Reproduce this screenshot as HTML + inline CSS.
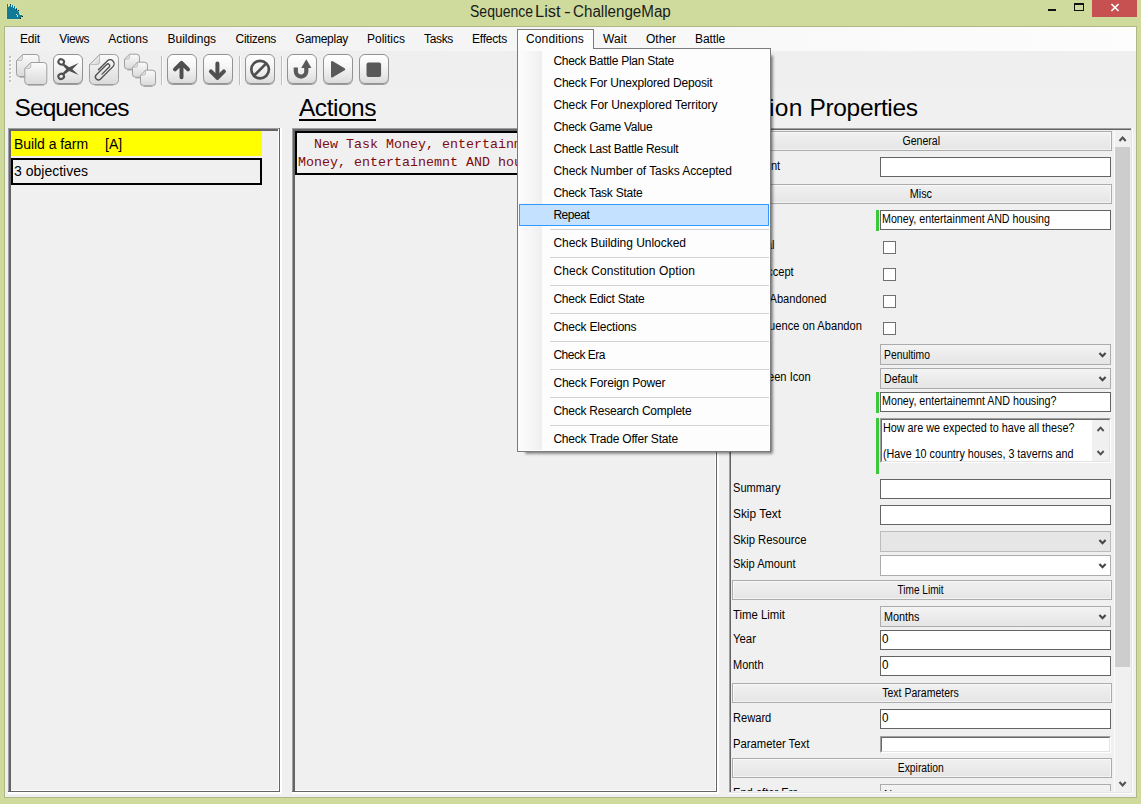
<!DOCTYPE html>
<html><head><meta charset="utf-8"><title>Sequence List - ChallengeMap</title>
<style>
html,body{margin:0;padding:0;}
body{width:1141px;height:804px;position:relative;overflow:hidden;background:#cedb9c;font-family:"Liberation Sans",sans-serif;}
.t{position:absolute;white-space:pre;}
div{box-sizing:border-box;}
.tb{position:absolute;top:54px;width:30px;height:30px;border:1px solid #929292;border-radius:6px;background:linear-gradient(#ffffff,#f6f6f6 40%,#dcdcdc);box-shadow:0 1px 0.5px rgba(0,0,0,.35);}
.tb svg{position:absolute;left:0;top:0;}
.hdr{position:absolute;left:732px;width:380px;height:20px;border:1px solid #acacac;background:linear-gradient(#f1f1f1,#e5e5e5);box-shadow:inset 0 0 0 1px rgba(255,255,255,.55);}
.tx{position:absolute;left:880px;width:231px;height:20px;border:1px solid #646464;background:#fff;}
.cb{position:absolute;left:883px;width:13px;height:13px;border:1px solid #707070;background:#fff;}
.combo{position:absolute;left:880px;width:231px;height:21px;border:1px solid #acacac;background:linear-gradient(#f3f3f3,#e5e5e5);}
.gbar{position:absolute;left:876px;width:3px;background:#3cc83c;}
.sep{position:absolute;left:550px;width:219px;height:1px;background:#d2d2d2;}
</style></head><body>

<div style="position:absolute;left:0;top:0;width:1141px;height:804px;background:#cedb9c;"></div>
<svg style="position:absolute;left:0;top:0" width="30" height="24" viewBox="0 0 30 24"><path d="M7 4 L8 4 L8 7 L9 7 L9 6 L10 6 L10 4 L11 4 L11 7 L12 7 L12 5 L13 5 L13 8 L14 8 L14 6 L15 6 L15 9 L16 9 L16 8 L17 8 L17 10 L18 11 L19 12 L19 14 L20 15 L22 15 L23 16.5 L22 17 L21 17 L21 19 L7 19 Z" fill="#0f7b98" stroke="#dfe3a6" stroke-width="1.2" paint-order="stroke"/><rect x="16" y="14" width="1" height="1" fill="#dfe6b4"/><rect x="17" y="15" width="1" height="2" fill="#dfe6b4"/><rect x="18" y="10" width="1" height="1" fill="#111"/><rect x="22" y="16" width="1" height="1" fill="#111"/><rect x="20" y="18" width="1" height="1" fill="#111"/><rect x="10" y="4" width="1" height="1" fill="#234"/><rect x="16" y="9" width="1" height="1" fill="#123"/></svg>
<span id="t1" class="t" style="left:469.5px;top:2.4499999999999993px;font-size:16px;line-height:20px;color:#1a1a1a;display:inline-block;transform:scaleX(0.8756);transform-origin:left center;">Sequence</span>
<span id="t2" class="t" style="left:535.2px;top:2.4499999999999993px;font-size:16px;line-height:20px;color:#1a1a1a;display:inline-block;transform:scaleX(1.0279);transform-origin:left center;">List</span>
<span id="t3" class="t" style="left:564.2px;top:2.4499999999999993px;font-size:16px;line-height:20px;color:#1a1a1a;display:inline-block;transform:scaleX(1.2575);transform-origin:left center;">-</span>
<span id="t4" class="t" style="left:572.9px;top:2.4499999999999993px;font-size:16px;line-height:20px;color:#1a1a1a;display:inline-block;transform:scaleX(0.9478);transform-origin:left center;">ChallengeMap</span>
<div style="position:absolute;left:1048px;top:9px;width:8px;height:2px;background:#111;"></div>
<div style="position:absolute;left:1074px;top:3px;width:10px;height:8px;border:1px solid #111;border-top:2px solid #111;"></div>
<div style="position:absolute;left:1092px;top:0px;width:45px;height:17px;background:#c75050;"></div>
<svg style="position:absolute;left:1110px;top:3px" width="10" height="9" viewBox="0 0 10 9"><path d="M1.4 1 L8.6 8 M8.6 1 L1.4 8" stroke="#fff" stroke-width="1.7" fill="none"/></svg>
<div style="position:absolute;left:4px;top:26px;width:1133px;height:772px;background:#adb882;"></div>
<div style="position:absolute;left:5px;top:27px;width:1131px;height:770px;background:#f0f0f0;"></div>
<div style="position:absolute;left:5px;top:27px;width:1131px;height:24px;background:linear-gradient(to right,#f0f0f0,#fdfdfd);"></div>
<div style="position:absolute;left:5px;top:51px;width:1131px;height:38px;background:#efefef;"></div>
<div style="position:absolute;left:517px;top:29px;width:77px;height:21px;background:#fdfdfd;border:1px solid #7c7c7c;border-bottom:none;"></div>
<span id="t5" class="t" style="left:20px;top:31.0px;font-size:12px;line-height:16px;color:#000;letter-spacing:-0.172px;">Edit</span>
<span id="t6" class="t" style="left:59.3px;top:31.0px;font-size:12px;line-height:16px;color:#000;letter-spacing:-0.419px;">Views</span>
<span id="t7" class="t" style="left:108.3px;top:31.0px;font-size:12px;line-height:16px;color:#000;letter-spacing:0.049px;">Actions</span>
<span id="t8" class="t" style="left:167.6px;top:31.0px;font-size:12px;line-height:16px;color:#000;letter-spacing:-0.034px;">Buildings</span>
<span id="t9" class="t" style="left:235.6px;top:31.0px;font-size:12px;line-height:16px;color:#000;letter-spacing:-0.286px;">Citizens</span>
<span id="t10" class="t" style="left:295.6px;top:31.0px;font-size:12px;line-height:16px;color:#000;letter-spacing:-0.288px;">Gameplay</span>
<span id="t11" class="t" style="left:367px;top:31.0px;font-size:12px;line-height:16px;color:#000;letter-spacing:-0.002px;">Politics</span>
<span id="t12" class="t" style="left:424px;top:31.0px;font-size:12px;line-height:16px;color:#000;letter-spacing:-0.338px;">Tasks</span>
<span id="t13" class="t" style="left:472px;top:31.0px;font-size:12px;line-height:16px;color:#000;letter-spacing:-0.210px;">Effects</span>
<span id="t14" class="t" style="left:526px;top:31.0px;font-size:12px;line-height:16px;color:#000;letter-spacing:0.130px;">Conditions</span>
<span id="t15" class="t" style="left:603px;top:31.0px;font-size:12px;line-height:16px;color:#000;letter-spacing:0.109px;">Wait</span>
<span id="t16" class="t" style="left:646px;top:31.0px;font-size:12px;line-height:16px;color:#000;letter-spacing:-0.003px;">Other</span>
<span id="t17" class="t" style="left:695px;top:31.0px;font-size:12px;line-height:16px;color:#000;letter-spacing:-0.115px;">Battle</span>
<div style="position:absolute;left:9px;top:56px;width:2px;height:2px;background:#c2c2c2;box-shadow:1px 1px 0 #fbfbfb;"></div>
<div style="position:absolute;left:9px;top:60px;width:2px;height:2px;background:#c2c2c2;box-shadow:1px 1px 0 #fbfbfb;"></div>
<div style="position:absolute;left:9px;top:64px;width:2px;height:2px;background:#c2c2c2;box-shadow:1px 1px 0 #fbfbfb;"></div>
<div style="position:absolute;left:9px;top:68px;width:2px;height:2px;background:#c2c2c2;box-shadow:1px 1px 0 #fbfbfb;"></div>
<div style="position:absolute;left:9px;top:72px;width:2px;height:2px;background:#c2c2c2;box-shadow:1px 1px 0 #fbfbfb;"></div>
<div style="position:absolute;left:9px;top:76px;width:2px;height:2px;background:#c2c2c2;box-shadow:1px 1px 0 #fbfbfb;"></div>
<div style="position:absolute;left:9px;top:80px;width:2px;height:2px;background:#c2c2c2;box-shadow:1px 1px 0 #fbfbfb;"></div>
<svg width="0" height="0" style="position:absolute"><defs><linearGradient id="pg" x1="0" y1="0" x2="0" y2="1"><stop offset="0" stop-color="#fbfbfb"/><stop offset="1" stop-color="#dadada"/></linearGradient><linearGradient id="pf" x1="0" y1="0" x2="1" y2="1"><stop offset="0.4" stop-color="#f4f4f4"/><stop offset="1" stop-color="#cfcfcf"/></linearGradient></defs></svg>
<svg style="position:absolute;left:15px;top:53px" width="34" height="34" viewBox="0 0 34 34"><path d="M7.5 1.5 L21.0 1.5 Q24.0 1.5 24.0 4.5 L24.0 20.5 Q24.0 23.5 21.0 23.5 L4.5 23.5 Q1.5 23.5 1.5 20.5 L1.5 7.5 Z" fill="url(#pg)" stroke="#9e9e9e" stroke-width="1"/><path d="M2.0 7.5 L7.5 2.0 L7.5 5.5 Q7.5 7.5 5.5 7.5 Z" fill="url(#pf)" stroke="#b4b4b4" stroke-width="0.8"/><path d="M4.5 24.3 L21.0 24.3" stroke="#8a8a8a" stroke-width="1" opacity="0.6"/><path d="M15.8 9.5 L28.8 9.5 Q31.8 9.5 31.8 12.5 L31.8 28.5 Q31.8 31.5 28.8 31.5 L12.8 31.5 Q9.8 31.5 9.8 28.5 L9.8 15.5 Z" fill="url(#pg)" stroke="#9e9e9e" stroke-width="1"/><path d="M10.3 15.5 L15.8 10.0 L15.8 13.5 Q15.8 15.5 13.8 15.5 Z" fill="url(#pf)" stroke="#b4b4b4" stroke-width="0.8"/><path d="M12.8 32.3 L28.8 32.3" stroke="#8a8a8a" stroke-width="1" opacity="0.6"/></svg>
<div class="tb" style="left:53px"><svg style="position:absolute;left:-1px;top:-1px" width="30" height="31" viewBox="0 0 30 31"><g stroke="#4f4f4f" fill="none" stroke-width="2"><ellipse cx="8.2" cy="7.9" rx="2.9" ry="2.6" transform="rotate(30 8.2 7.9)"/><ellipse cx="8.2" cy="22.4" rx="2.9" ry="2.6" transform="rotate(-30 8.2 22.4)"/></g><path d="M10.4 9.2 L16.2 13.3 L25.6 9.1 L19.4 15.2 L25.6 20.9 L16.2 17.1 L10.4 21.2 L9.3 19.4 L13.4 15.2 L9.3 11 Z" fill="#4f4f4f"/></svg></div>
<svg style="position:absolute;left:88px;top:53px" width="34" height="34" viewBox="0 0 34 34"><path d="M11.5 1.5 L25.5 1.5 Q30.5 1.5 30.5 6.5 L30.5 26.5 Q30.5 31.5 25.5 31.5 L6.5 31.5 Q1.5 31.5 1.5 26.5 L1.5 11.5 Z" fill="url(#pg)" stroke="#9e9e9e" stroke-width="1"/><path d="M2.0 11.5 L11.5 2.0 L11.5 9.5 Q11.5 11.5 9.5 11.5 Z" fill="url(#pf)" stroke="#b4b4b4" stroke-width="0.8"/><path d="M6.5 32.3 L25.5 32.3" stroke="#8a8a8a" stroke-width="1" opacity="0.6"/><g transform="translate(16.1 16.8) rotate(45)"><path d="M-4 4 L-4 -8.5 A4 4 0 0 1 4 -8.5 L4 9 A3 3 0 0 1 -2 9 L-2 -5.6 A1.8 1.8 0 0 1 1.6 -5.6 L1.6 4.5" stroke="#505050" stroke-width="1.35" fill="none" stroke-linecap="round"/></g></svg>
<svg style="position:absolute;left:123px;top:53px" width="36" height="36" viewBox="0 0 36 36"><path d="M6.5 1.2 L13.5 1.2 Q16.5 1.2 16.5 4.2 L16.5 13.2 Q16.5 16.2 13.5 16.2 L4.5 16.2 Q1.5 16.2 1.5 13.2 L1.5 6.2 Z" fill="url(#pg)" stroke="#9e9e9e" stroke-width="1"/><path d="M2.0 6.2 L6.5 1.7 L6.5 4.2 Q6.5 6.2 4.5 6.2 Z" fill="url(#pf)" stroke="#b4b4b4" stroke-width="0.8"/><path d="M4.5 17.0 L13.5 17.0" stroke="#8a8a8a" stroke-width="1" opacity="0.6"/><path d="M14.5 9.2 L21.5 9.2 Q24.5 9.2 24.5 12.2 L24.5 21.2 Q24.5 24.2 21.5 24.2 L12.5 24.2 Q9.5 24.2 9.5 21.2 L9.5 14.2 Z" fill="url(#pg)" stroke="#9e9e9e" stroke-width="1"/><path d="M10.0 14.2 L14.5 9.7 L14.5 12.2 Q14.5 14.2 12.5 14.2 Z" fill="url(#pf)" stroke="#b4b4b4" stroke-width="0.8"/><path d="M12.5 25.0 L21.5 25.0" stroke="#8a8a8a" stroke-width="1" opacity="0.6"/><path d="M22.5 17.2 L29.5 17.2 Q32.5 17.2 32.5 20.2 L32.5 29.700000000000003 Q32.5 32.7 29.5 32.7 L20.5 32.7 Q17.5 32.7 17.5 29.700000000000003 L17.5 22.2 Z" fill="url(#pg)" stroke="#9e9e9e" stroke-width="1"/><path d="M18.0 22.2 L22.5 17.7 L22.5 20.2 Q22.5 22.2 20.5 22.2 Z" fill="url(#pf)" stroke="#b4b4b4" stroke-width="0.8"/><path d="M20.5 33.5 L29.5 33.5" stroke="#8a8a8a" stroke-width="1" opacity="0.6"/></svg>
<div style="position:absolute;left:161px;top:56px;width:1px;height:29px;background:#bdbdbd;"></div>
<div style="position:absolute;left:162px;top:56px;width:1px;height:29px;background:#fafafa;"></div>
<div class="tb" style="left:167px"><svg style="position:absolute;left:-1px;top:-1px" width="30" height="31" viewBox="0 0 30 31"><path d="M14.5 9 L14.5 23.3 M8 15.4 L14.5 8.9 L21 15.4" stroke="#4f4f4f" stroke-width="4" fill="none" stroke-linecap="round" stroke-linejoin="round"/></svg></div>
<div class="tb" style="left:203px"><svg style="position:absolute;left:-1px;top:-1px" width="30" height="31" viewBox="0 0 30 31"><path d="M14.4 9.4 L14.4 23.9 M7.9 17.4 L14.4 23.9 L20.9 17.4" stroke="#4f4f4f" stroke-width="4" fill="none" stroke-linecap="round" stroke-linejoin="round"/></svg></div>
<div style="position:absolute;left:239px;top:56px;width:1px;height:29px;background:#bdbdbd;"></div>
<div style="position:absolute;left:240px;top:56px;width:1px;height:29px;background:#fafafa;"></div>
<div class="tb" style="left:245px"><svg style="position:absolute;left:-1px;top:-1px" width="30" height="31" viewBox="0 0 30 31"><circle cx="15.1" cy="15.6" r="8.8" stroke="#4f4f4f" stroke-width="2.7" fill="none"/><path d="M8.9 21.8 L21.3 9.4" stroke="#4f4f4f" stroke-width="2.7"/></svg></div>
<div style="position:absolute;left:281px;top:56px;width:1px;height:29px;background:#bdbdbd;"></div>
<div style="position:absolute;left:282px;top:56px;width:1px;height:29px;background:#fafafa;"></div>
<div class="tb" style="left:287px"><svg style="position:absolute;left:-1px;top:-1px" width="30" height="31" viewBox="0 0 30 31"><path d="M8.8 13.5 L8.8 17.3 A5.25 5.25 0 0 0 19.3 17.3 L19.3 12.5" stroke="#595959" stroke-width="4.2" fill="none"/><path d="M14.2 14 L19.3 5.2 L24.4 14 Z" fill="#595959"/></svg></div>
<div class="tb" style="left:323px"><svg style="position:absolute;left:-1px;top:-1px" width="30" height="31" viewBox="0 0 30 31"><path d="M9.2 8.3 L21 15.3 L9.2 22.3 Z" fill="#595959" stroke="#595959" stroke-width="2.4" stroke-linejoin="round"/></svg></div>
<div class="tb" style="left:359px"><svg style="position:absolute;left:-1px;top:-1px" width="30" height="31" viewBox="0 0 30 31"><rect x="7.5" y="8.6" width="14.6" height="14.4" rx="2" fill="#595959"/></svg></div>
<span id="t18" class="t" style="left:14.6px;top:93.3px;font-size:24.5px;line-height:30px;color:#000;letter-spacing:-0.957px;">Sequences</span>
<span id="t19" class="t" style="left:299px;top:93.3px;font-size:24.5px;line-height:30px;color:#000;letter-spacing:-0.478px;text-decoration:underline;text-decoration-thickness:1.5px;text-underline-offset:2.5px;">Actions</span>
<div style="position:absolute;left:8px;top:128px;width:274px;height:666px;background:#fff;"></div>
<div style="position:absolute;left:8px;top:128px;width:272px;height:664px;background:#646464;"></div>
<div style="position:absolute;left:8px;top:128px;width:271px;height:663px;background:#fff;border-left:1px solid #a0a0a0;border-top:1px solid #a0a0a0;"></div>
<div style="position:absolute;left:9px;top:129px;width:2px;height:663px;background:#646468;"></div>
<div style="position:absolute;left:9px;top:129px;width:269px;height:661px;background:#f0f0f0;border-left:2px solid #646468;border-top:2px solid #646468;"></div>
<div style="position:absolute;left:11px;top:131px;width:251px;height:25px;background:#ffff00;"></div>
<span id="t20" class="t" style="left:14px;top:135.0px;font-size:14px;line-height:18px;color:#000;letter-spacing:-0.059px;">Build a farm</span>
<span id="t21" class="t" style="left:105px;top:135.0px;font-size:14px;line-height:18px;color:#000;">[A]</span>
<div style="position:absolute;left:11px;top:158px;width:251px;height:27px;border:2px solid #000;"></div>
<span id="t22" class="t" style="left:14px;top:162.0px;font-size:14px;line-height:18px;color:#000;letter-spacing:0.005px;">3 objectives</span>
<div style="position:absolute;left:292px;top:128px;width:427px;height:666px;background:#fff;"></div>
<div style="position:absolute;left:292px;top:128px;width:425px;height:664px;background:#646464;"></div>
<div style="position:absolute;left:292px;top:128px;width:424px;height:663px;background:#fff;border-left:1px solid #a0a0a0;border-top:1px solid #a0a0a0;"></div>
<div style="position:absolute;left:293px;top:129px;width:2px;height:663px;background:#646468;"></div>
<div style="position:absolute;left:293px;top:129px;width:422px;height:661px;background:#f0f0f0;border-left:2px solid #646468;border-top:2px solid #646468;"></div>
<div style="position:absolute;left:295px;top:131px;width:420px;height:44px;border:2px solid #000;overflow:hidden;"><span class="t" style="left:1px;top:4px;font-size:13.333px;line-height:16px;font-family:'Liberation Mono',monospace;color:#7d0c0c;">  New Task Money, entertainment AND housing</span><span class="t" style="left:1px;top:21.5px;font-size:13.333px;line-height:16px;font-family:'Liberation Mono',monospace;color:#7d0c0c;">Money, entertainemnt AND housing?</span></div>
<div style="position:absolute;left:729px;top:128px;width:404px;height:666px;background:#fff;"></div>
<div style="position:absolute;left:729px;top:128px;width:403px;height:665px;background:#e3e3e3;"></div>
<div style="position:absolute;left:729px;top:128px;width:402px;height:664px;background:#f0f0f0;border-left:1px solid #a0a0a0;border-top:1px solid #a0a0a0;"></div>
<div style="position:absolute;left:730px;top:129px;width:401px;height:663px;border-left:1px solid #646464;border-top:1px solid #646464;"></div>
<span id="t23" class="t" style="left:733px;top:93.3px;font-size:24.5px;line-height:30px;color:#000;letter-spacing:0.234px;">Action</span>
<span id="t24" class="t" style="left:809.6px;top:93.3px;font-size:24.5px;line-height:30px;color:#000;letter-spacing:-0.367px;">Properties</span>
<div style="position:absolute;left:1114px;top:130px;width:1px;height:662px;background:#fbfbfb;"></div>
<div style="position:absolute;left:1115px;top:130px;width:16px;height:662px;background:#f0f0f0;"></div>
<div style="position:absolute;left:1115px;top:147px;width:15px;height:520px;background:#cdcdcd;"></div>
<svg style="position:absolute;left:1118px;top:135px" width="9" height="8" viewBox="0 0 9 8"><path d="M1.5 6 L4.6 2.6 L7.7 6" stroke="#505050" stroke-width="2" fill="none"/></svg>
<svg style="position:absolute;left:1118px;top:780px" width="9" height="8" viewBox="0 0 9 8"><path d="M1.5 2 L4.6 5.4 L7.7 2" stroke="#505050" stroke-width="2" fill="none"/></svg>
<div class="hdr" style="top:131px"></div>
<div class="t" style="left:721px;width:400px;text-align:center;top:133.67px;font-size:12.5px;line-height:14px;color:#000;"><span id="t25" style="display:inline-block;display:inline-block;transform:scaleX(0.8452);transform-origin:center center;">General</span></div>
<span class="t" style="right:361px;top:158.67px;font-size:12.5px;line-height:14px;transform:scaleX(0.89);transform-origin:right center;">Comment</span>
<div class="tx" style="top:157px;height:20px"></div>
<div class="hdr" style="top:184px"></div>
<div class="t" style="left:721px;width:400px;text-align:center;top:186.67px;font-size:12.5px;line-height:14px;color:#000;"><span id="t26" style="display:inline-block;display:inline-block;transform:scaleX(0.8676);transform-origin:center center;">Misc</span></div>
<span class="t" style="right:381px;top:211.67px;font-size:12.5px;line-height:14px;transform:scaleX(0.89);transform-origin:right center;">Title</span>
<div class="gbar" style="top:210px;height:21px"></div>
<div class="tx" style="top:210px;height:20px"></div>
<span id="t27" class="t" style="left:882px;top:211.67px;font-size:12.5px;line-height:14px;color:#000;display:inline-block;transform:scaleX(0.8554);transform-origin:left center;">Money, entertainment AND housing</span>
<span class="t" style="right:366.4px;top:237.67px;font-size:12.5px;line-height:14px;transform:scaleX(0.89);transform-origin:right center;">Optional</span>
<span class="t" style="right:347.6px;top:264.67px;font-size:12.5px;line-height:14px;transform:scaleX(0.89);transform-origin:right center;">Auto Accept</span>
<span class="t" style="right:314.29999999999995px;top:291.67px;font-size:12.5px;line-height:14px;transform:scaleX(0.89);transform-origin:right center;">Can Be Abandoned</span>
<span class="t" style="right:279px;top:318.67px;font-size:12.5px;line-height:14px;transform:scaleX(0.89);transform-origin:right center;">Run Sequence on Abandon</span>
<div class="cb" style="top:241px"></div>
<div class="cb" style="top:268px"></div>
<div class="cb" style="top:295px"></div>
<div class="cb" style="top:322px"></div>
<span class="t" style="right:375px;top:345.67px;font-size:12.5px;line-height:14px;transform:scaleX(0.89);transform-origin:right center;">Character</span>
<div class="combo" style="top:344px;"></div>
<svg style="position:absolute;left:1098px;top:352px" width="9" height="6" viewBox="0 0 9 6"><path d="M1.4 1 L4.5 4.3 L7.6 1" stroke="#474747" stroke-width="2.1" fill="none"/></svg>
<span id="t28" class="t" style="left:884px;top:347.67px;font-size:12.5px;line-height:14px;color:#000;display:inline-block;transform:scaleX(0.8274);transform-origin:left center;">Penultimo</span>
<span class="t" style="right:330px;top:369.67px;font-size:12.5px;line-height:14px;transform:scaleX(0.89);transform-origin:right center;">Loading Screen Icon</span>
<div class="combo" style="top:368px;"></div>
<svg style="position:absolute;left:1098px;top:376px" width="9" height="6" viewBox="0 0 9 6"><path d="M1.4 1 L4.5 4.3 L7.6 1" stroke="#474747" stroke-width="2.1" fill="none"/></svg>
<span id="t29" class="t" style="left:884px;top:371.67px;font-size:12.5px;line-height:14px;color:#000;display:inline-block;transform:scaleX(0.8508);transform-origin:left center;">Default</span>
<span class="t" style="right:381px;top:393.67px;font-size:12.5px;line-height:14px;transform:scaleX(0.89);transform-origin:right center;">Text</span>
<div class="gbar" style="top:392px;height:21px"></div>
<div class="tx" style="top:392px;height:20px"></div>
<span id="t30" class="t" style="left:882px;top:393.67px;font-size:12.5px;line-height:14px;color:#000;display:inline-block;transform:scaleX(0.8581);transform-origin:left center;">Money, entertainemnt AND housing?</span>
<span class="t" style="right:375px;top:419.67px;font-size:12.5px;line-height:14px;transform:scaleX(0.89);transform-origin:right center;">Description</span>
<div class="gbar" style="top:418px;height:56px"></div>
<div style="position:absolute;left:880px;top:418px;width:231px;height:45px;background:#fff;border-top:1px solid #a0a0a0;border-left:1px solid #a0a0a0;border-right:1px solid #fff;border-bottom:1px solid #fff;"></div>
<div style="position:absolute;left:881px;top:419px;width:229px;height:43px;border-top:1px solid #696969;border-left:1px solid #696969;border-right:1px solid #e3e3e3;border-bottom:1px solid #e3e3e3;"></div>
<div style="position:absolute;left:1092px;top:420px;width:17px;height:41px;background:#f0f0f0;"></div>
<span id="t31" class="t" style="left:883px;top:420.67px;font-size:12.5px;line-height:14px;color:#000;display:inline-block;transform:scaleX(0.8639);transform-origin:left center;">How are we expected to have all these?</span>
<span id="t32" class="t" style="left:883px;top:446.67px;font-size:12.5px;line-height:14px;color:#000;display:inline-block;transform:scaleX(0.8594);transform-origin:left center;">(Have 10 country houses, 3 taverns and</span>
<svg style="position:absolute;left:1095.5px;top:425px" width="9" height="8" viewBox="0 0 9 8"><path d="M1.5 6 L4.6 2.6 L7.7 6" stroke="#505050" stroke-width="1.9" fill="none"/></svg>
<svg style="position:absolute;left:1095.5px;top:449px" width="9" height="8" viewBox="0 0 9 8"><path d="M1.5 2 L4.6 5.4 L7.7 2" stroke="#505050" stroke-width="1.9" fill="none"/></svg>
<span id="t33" class="t" style="left:733px;top:480.67px;font-size:12.5px;line-height:14px;color:#000;display:inline-block;transform:scaleX(0.8881);transform-origin:left center;">Summary</span>
<div class="tx" style="top:479px;height:20px"></div>
<span id="t34" class="t" style="left:733px;top:506.6700000000001px;font-size:12.5px;line-height:14px;color:#000;display:inline-block;transform:scaleX(0.9505);transform-origin:left center;">Skip Text</span>
<div class="tx" style="top:505px;height:20px"></div>
<span id="t35" class="t" style="left:733px;top:532.67px;font-size:12.5px;line-height:14px;color:#000;display:inline-block;transform:scaleX(0.9041);transform-origin:left center;">Skip Resource</span>
<div class="combo" style="top:531px;background:#e6e6e6;border-color:#bcbcbc;"></div>
<svg style="position:absolute;left:1098px;top:539px" width="9" height="6" viewBox="0 0 9 6"><path d="M1.4 1 L4.5 4.3 L7.6 1" stroke="#474747" stroke-width="2.1" fill="none"/></svg>
<span id="t36" class="t" style="left:733px;top:556.67px;font-size:12.5px;line-height:14px;color:#000;display:inline-block;transform:scaleX(0.8905);transform-origin:left center;">Skip Amount</span>
<div class="combo" style="top:555px;background:#fff;"></div>
<svg style="position:absolute;left:1098px;top:563px" width="9" height="6" viewBox="0 0 9 6"><path d="M1.4 1 L4.5 4.3 L7.6 1" stroke="#474747" stroke-width="2.1" fill="none"/></svg>
<div class="hdr" style="top:580px"></div>
<div class="t" style="left:721px;width:400px;text-align:center;top:582.67px;font-size:12.5px;line-height:14px;color:#000;"><span id="t37" style="display:inline-block;display:inline-block;transform:scaleX(0.8044);transform-origin:center center;">Time Limit</span></div>
<span id="t38" class="t" style="left:733px;top:607.67px;font-size:12.5px;line-height:14px;color:#000;display:inline-block;transform:scaleX(0.9093);transform-origin:left center;">Time Limit</span>
<div class="combo" style="top:606px;"></div>
<svg style="position:absolute;left:1098px;top:614px" width="9" height="6" viewBox="0 0 9 6"><path d="M1.4 1 L4.5 4.3 L7.6 1" stroke="#474747" stroke-width="2.1" fill="none"/></svg>
<span id="t39" class="t" style="left:884px;top:609.67px;font-size:12.5px;line-height:14px;color:#000;display:inline-block;transform:scaleX(0.8659);transform-origin:left center;">Months</span>
<span id="t40" class="t" style="left:733px;top:631.67px;font-size:12.5px;line-height:14px;color:#000;display:inline-block;transform:scaleX(0.9103);transform-origin:left center;">Year</span>
<div class="tx" style="top:630px;height:20px"></div>
<span id="t41" class="t" style="left:882px;top:631.67px;font-size:12.5px;line-height:14px;color:#000;display:inline-block;transform:scaleX(0.9348);transform-origin:left center;">0</span>
<span id="t42" class="t" style="left:733px;top:657.67px;font-size:12.5px;line-height:14px;color:#000;display:inline-block;transform:scaleX(0.8777);transform-origin:left center;">Month</span>
<div class="tx" style="top:656px;height:20px"></div>
<span id="t43" class="t" style="left:882px;top:657.67px;font-size:12.5px;line-height:14px;color:#000;display:inline-block;transform:scaleX(0.9348);transform-origin:left center;">0</span>
<div class="hdr" style="top:683px"></div>
<div class="t" style="left:721px;width:400px;text-align:center;top:685.67px;font-size:12.5px;line-height:14px;color:#000;"><span id="t44" style="display:inline-block;display:inline-block;transform:scaleX(0.8405);transform-origin:center center;">Text Parameters</span></div>
<span id="t45" class="t" style="left:733px;top:710.67px;font-size:12.5px;line-height:14px;color:#000;display:inline-block;transform:scaleX(0.8891);transform-origin:left center;">Reward</span>
<div class="tx" style="top:709px;height:20px"></div>
<span id="t46" class="t" style="left:882px;top:710.67px;font-size:12.5px;line-height:14px;color:#000;display:inline-block;transform:scaleX(0.9348);transform-origin:left center;">0</span>
<span id="t47" class="t" style="left:733px;top:736.67px;font-size:12.5px;line-height:14px;color:#000;display:inline-block;transform:scaleX(0.9026);transform-origin:left center;">Parameter Text</span>
<div style="position:absolute;left:880px;top:736px;width:231px;height:17px;background:#fff;border-top:1px solid #a0a0a0;border-left:1px solid #a0a0a0;border-right:1px solid #fff;border-bottom:1px solid #fff;"></div>
<div style="position:absolute;left:881px;top:737px;width:229px;height:15px;border-top:1px solid #696969;border-left:1px solid #696969;border-right:1px solid #e3e3e3;border-bottom:1px solid #e3e3e3;"></div>
<div class="hdr" style="top:758px"></div>
<div class="t" style="left:721px;width:400px;text-align:center;top:760.67px;font-size:12.5px;line-height:14px;color:#000;"><span id="t48" style="display:inline-block;display:inline-block;transform:scaleX(0.8274);transform-origin:center center;">Expiration</span></div>
<div style="position:absolute;left:731px;top:780px;width:383px;height:11px;overflow:hidden;"><span class="t" style="left:2px;top:5.669999999999959px;font-size:12.5px;line-height:14px;transform:scaleX(0.89);transform-origin:left center;">End after Era</span><div style="position:absolute;left:149px;top:4px;width:231px;height:21px;border:1px solid #acacac;background:linear-gradient(#f3f3f3,#e5e5e5);"></div><span class="t" style="left:153px;top:7.669999999999959px;font-size:12.5px;line-height:14px;transform:scaleX(0.89);transform-origin:left center;">None</span></div>
<div style="position:absolute;left:517px;top:48px;width:254px;height:404px;background:#fdfdfd;border:1px solid #7c7c7c;box-shadow:4.8px 4.2px 3px -2.7px rgba(0,0,0,.58);"></div>
<div style="position:absolute;left:518px;top:30px;width:75px;height:20px;background:#fdfdfd;"></div>
<span id="t49" class="t" style="left:526px;top:31.0px;font-size:12px;line-height:16px;color:#000;letter-spacing:0.130px;">Conditions</span>
<div style="position:absolute;left:520px;top:51px;width:22px;height:399px;background:linear-gradient(to right,#fcfcfc,#efefef);"></div>
<span id="t50" class="t" style="left:553.4px;top:53.0px;font-size:12px;line-height:16px;color:#000;letter-spacing:-0.272px;">Check Battle Plan State</span>
<span id="t51" class="t" style="left:553.4px;top:75.0px;font-size:12px;line-height:16px;color:#000;letter-spacing:-0.181px;">Check For Unexplored Deposit</span>
<span id="t52" class="t" style="left:553.4px;top:97.0px;font-size:12px;line-height:16px;color:#000;letter-spacing:-0.084px;">Check For Unexplored Territory</span>
<span id="t53" class="t" style="left:553.4px;top:119.0px;font-size:12px;line-height:16px;color:#000;letter-spacing:-0.261px;">Check Game Value</span>
<span id="t54" class="t" style="left:553.4px;top:141.0px;font-size:12px;line-height:16px;color:#000;letter-spacing:-0.267px;">Check Last Battle Result</span>
<span id="t55" class="t" style="left:553.4px;top:163.0px;font-size:12px;line-height:16px;color:#000;letter-spacing:-0.046px;">Check Number of Tasks Accepted</span>
<span id="t56" class="t" style="left:553.4px;top:185.0px;font-size:12px;line-height:16px;color:#000;letter-spacing:-0.261px;">Check Task State</span>
<div style="position:absolute;left:519px;top:204px;width:250px;height:22px;background:#c4e1ff;border:1px solid #3399ff;"></div>
<span id="t57" class="t" style="left:553.4px;top:207.0px;font-size:12px;line-height:16px;color:#000;letter-spacing:-0.451px;">Repeat</span>
<div class="sep" style="top:229px"></div>
<span id="t58" class="t" style="left:553.4px;top:235.0px;font-size:12px;line-height:16px;color:#000;letter-spacing:-0.039px;">Check Building Unlocked</span>
<div class="sep" style="top:257px"></div>
<span id="t59" class="t" style="left:553.4px;top:263.0px;font-size:12px;line-height:16px;color:#000;letter-spacing:0.084px;">Check Constitution Option</span>
<div class="sep" style="top:285px"></div>
<span id="t60" class="t" style="left:553.4px;top:291.0px;font-size:12px;line-height:16px;color:#000;letter-spacing:-0.258px;">Check Edict State</span>
<div class="sep" style="top:313px"></div>
<span id="t61" class="t" style="left:553.4px;top:319.0px;font-size:12px;line-height:16px;color:#000;letter-spacing:-0.203px;">Check Elections</span>
<div class="sep" style="top:341px"></div>
<span id="t62" class="t" style="left:553.4px;top:347.0px;font-size:12px;line-height:16px;color:#000;letter-spacing:-0.503px;">Check Era</span>
<div class="sep" style="top:369px"></div>
<span id="t63" class="t" style="left:553.4px;top:375.0px;font-size:12px;line-height:16px;color:#000;letter-spacing:-0.178px;">Check Foreign Power</span>
<div class="sep" style="top:397px"></div>
<span id="t64" class="t" style="left:553.4px;top:403.0px;font-size:12px;line-height:16px;color:#000;letter-spacing:-0.235px;">Check Research Complete</span>
<div class="sep" style="top:425px"></div>
<span id="t65" class="t" style="left:553.4px;top:431.0px;font-size:12px;line-height:16px;color:#000;letter-spacing:-0.204px;">Check Trade Offer State</span>
</body></html>
